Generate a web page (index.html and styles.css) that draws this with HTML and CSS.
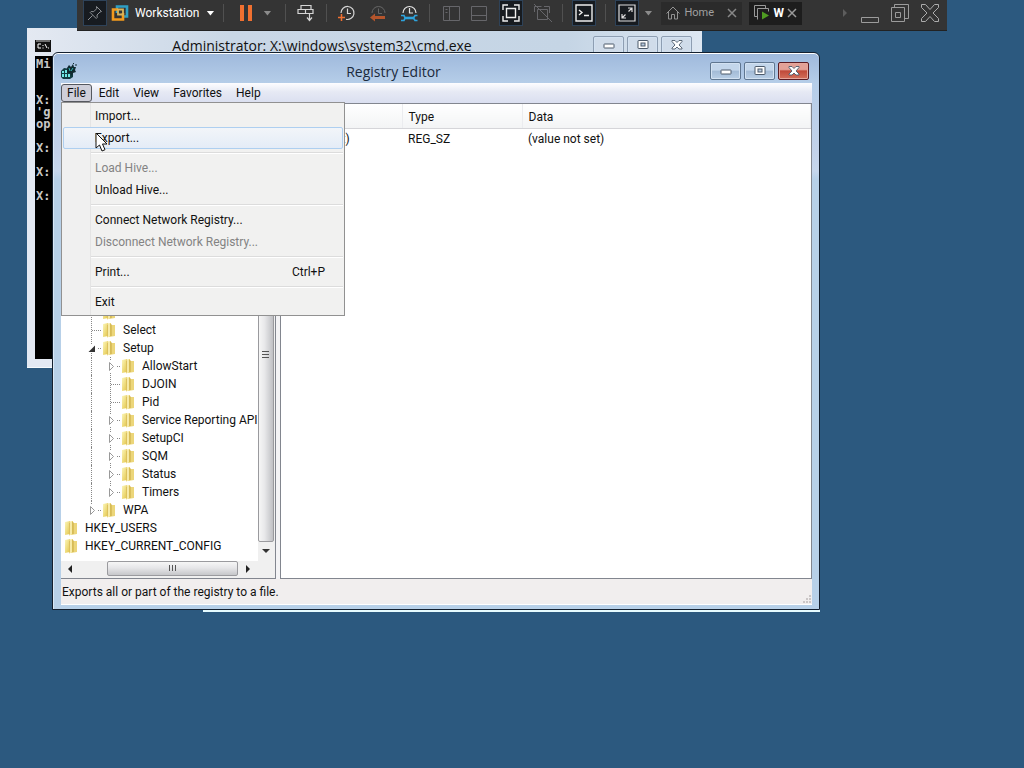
FILE: index.html
```html
<!DOCTYPE html>
<html lang="en">
<head>
<meta charset="utf-8">
<title>Registry Editor</title>
<link rel="stylesheet" href="styles.css">
</head>
<body>
<svg class="defs" width="0" height="0" aria-hidden="true">
  <defs>
    <linearGradient id="gold" x1="0" x2="1" y1="0" y2="1"><stop offset="0" stop-color="#fbf6bb"/><stop offset="1" stop-color="#e3c548"/></linearGradient>
    <linearGradient id="gold2" x1="0" x2="1"><stop offset="0" stop-color="#e3c862"/><stop offset=".5" stop-color="#fdf6c0"/><stop offset="1" stop-color="#e2c553"/></linearGradient>
    <symbol id="folder" viewBox="0 0 14 16"><path d="M1 2 6 1v13l-5 1z" fill="url(#gold)"/><path d="M7 3h6v11l-6 1z" fill="#ecd67a"/><path d="M5 1.500 9 1v13l-4 1.500z" fill="url(#gold2)"/><path d="M9 2v12" stroke="#b9952c" stroke-width=".7"/><path d="M5.500 3v11" stroke="#cfae45" stroke-width=".5"/></symbol>
    <symbol id="twig" viewBox="0 0 16 18"><path d="M5.500 0v18" stroke="#888" stroke-dasharray="1 1"/><path d="M3 4h7v11H3z" fill="#fff"/><path d="M4.500 5.500v8l4-4z" fill="#fff" stroke="#999"/><path d="M12 9.500h4" stroke="#888" stroke-dasharray="1 1"/></symbol>
    <symbol id="last" viewBox="0 0 16 18"><path d="M5.500 0v9" stroke="#888" stroke-dasharray="1 1"/><path d="M3 4h7v11H3z" fill="#fff"/><path d="M4.500 5.500v8l4-4z" fill="#fff" stroke="#999"/><path d="M12 9.500h4" stroke="#888" stroke-dasharray="1 1"/></symbol>
    <symbol id="open" viewBox="0 0 16 18"><path d="M5.500 0v18" stroke="#888" stroke-dasharray="1 1"/><path d="M2 5h9v9H2z" fill="#fff"/><path d="M9 6.500V13H2.500z" fill="#333"/><path d="M12 9.500h4" stroke="#888" stroke-dasharray="1 1"/></symbol>
    <symbol id="leaf" viewBox="0 0 16 18"><path d="M5.500 0v18M6 9.500h10" stroke="#888" stroke-dasharray="1 1"/></symbol>
    <symbol id="min" viewBox="0 0 14 12"><rect x="2" y="5" width="10" height="4" rx=".5" fill="#fff" stroke="#4c5a6b"/></symbol>
    <symbol id="max" viewBox="0 0 14 12"><rect x="2" y="1.500" width="10" height="8" rx=".5" fill="#fff" stroke="#4c5a6b"/><rect x="5" y="4" width="4" height="3" fill="#b9cbe0" stroke="#4c5a6b"/></symbol>
    <symbol id="cross" viewBox="0 0 14 12"><path d="M2 1.500h3l2 2 2-2h3v1L9 6l3 3v1H9L7 8l-2 2H2V9l3-3-3-3.500z" fill="#fff" stroke="#4c5a6b" stroke-width=".9"/></symbol>
  </defs>
</svg>
<main class="desktop">

  <section class="cmd">
    <header class="cmd-title">
      <svg class="cmd-icon" viewBox="0 0 16 12"><rect width="16" height="12" fill="#111"/><path d="M1 1h14" stroke="#ccc"/><path d="M6 4H3v4h3M8 5v1M8 7.500v1M10 4l2 4M13.500 7.500v1" stroke="#fff" fill="none"/></svg>
      <h2>Administrator: X:\windows\system32\cmd.exe</h2>
      <div class="caption">
        <button aria-label="Minimize console"><svg><use href="#min"/></svg></button>
        <button aria-label="Maximize console"><svg><use href="#max"/></svg></button>
        <button aria-label="Close console"><svg><use href="#cross"/></svg></button>
      </div>
    </header>
<pre class="console">Mi


X:
'g
op

X:

X:

X:</pre>
  </section>

  <div class="back-edge"></div>

  <section class="regedit">
    <header class="reg-title">
      <svg class="reg-icon" viewBox="0 0 16 16"><path d="M0 8 3 5l7 1 2 2v6l-3 2H2l-2-2z" fill="#123c42"/><path d="M1 8h2v2H1zM4 7h2v3H4zM1 11h2v3H1zM4 11h2v3H4zM7 11h2v3H7z" fill="#6fe8e4"/><path d="M6 5l2-3 2 2 2-3 1 3 2 0-1 3 1 2-3 1-1 3-2-3-3 0z" fill="#102a30"/><path d="M8 5l1 3M12 5l-2 3" stroke="#37b5b5"/><path d="M12 0l1 1M15 1v2" stroke="#102a30"/></svg>
      <h1>Registry Editor</h1>
      <div class="caption">
        <button aria-label="Minimize"><svg><use href="#min"/></svg></button>
        <button aria-label="Maximize"><svg><use href="#max"/></svg></button>
        <button class="close" aria-label="Close"><svg><use href="#cross"/></svg></button>
      </div>
    </header>

    <div class="client">
      <nav class="menubar">
        <button class="open">File</button><button>Edit</button><button>View</button><button>Favorites</button><button>Help</button>
      </nav>
      <div class="panes">
        <div class="tree-pane">
          <div class="tree-row">
            <ul class="tree">
              <li class="l1"><svg class="line"><use href="#leaf"/></svg><svg class="folder"><use href="#folder"/></svg></li>
              <li class="l1"><svg class="line"><use href="#leaf"/></svg><svg class="folder"><use href="#folder"/></svg>Select</li>
              <li class="l1"><svg class="line"><use href="#open"/></svg><svg class="folder"><use href="#folder"/></svg>Setup</li>
              <li class="l2"><svg class="line"><use href="#twig"/></svg><svg class="folder"><use href="#folder"/></svg>AllowStart</li>
              <li class="l2"><svg class="line"><use href="#leaf"/></svg><svg class="folder"><use href="#folder"/></svg>DJOIN</li>
              <li class="l2"><svg class="line"><use href="#leaf"/></svg><svg class="folder"><use href="#folder"/></svg>Pid</li>
              <li class="l2"><svg class="line"><use href="#twig"/></svg><svg class="folder"><use href="#folder"/></svg>Service Reporting API</li>
              <li class="l2"><svg class="line"><use href="#twig"/></svg><svg class="folder"><use href="#folder"/></svg>SetupCI</li>
              <li class="l2"><svg class="line"><use href="#twig"/></svg><svg class="folder"><use href="#folder"/></svg>SQM</li>
              <li class="l2"><svg class="line"><use href="#twig"/></svg><svg class="folder"><use href="#folder"/></svg>Status</li>
              <li class="l2"><svg class="line"><use href="#last"/></svg><svg class="folder"><use href="#folder"/></svg>Timers</li>
              <li class="l1"><svg class="line"><use href="#last"/></svg><svg class="folder"><use href="#folder"/></svg>WPA</li>
              <li class="l0"><svg class="folder"><use href="#folder"/></svg>HKEY_USERS</li>
              <li class="l0"><svg class="folder"><use href="#folder"/></svg>HKEY_CURRENT_CONFIG</li>
            </ul>
            <div class="vscroll">
              <div class="vthumb"><svg width="8" height="9"><path d="M0 1.500h7M0 4.500h7M0 7.500h7" stroke="#555"/></svg></div>
              <svg class="varrow" width="8" height="5"><path d="M0 0h8L4 4z" fill="#333"/></svg>
            </div>
          </div>
          <div class="hscroll">
            <svg width="5" height="8"><path d="M4 0v8L0 4z" fill="#222"/></svg>
            <div class="hthumb"><svg width="9" height="7"><path d="M1.500 0v6M4.500 0v6M7.500 0v6" stroke="#555"/></svg></div>
            <svg width="5" height="8"><path d="M0 0v8l4-4z" fill="#222"/></svg>
          </div>
        </div>
        <div class="list-pane">
          <table>
            <thead><tr><th class="c-name">Name</th><th class="c-type">Type</th><th>Data</th></tr></thead>
            <tbody><tr><td class="name">(Default)</td><td>REG_SZ</td><td>(value not set)</td></tr></tbody>
          </table>
        </div>
      </div>
      <footer class="status"><span>Exports all or part of the registry to a file.</span>
        <svg width="10" height="10"><path d="M8 1h2v2H8zM8 4h2v2H8zM5 4h2v2H5zM8 7h2v2H8zM5 7h2v2H5zM2 7h2v2H2z" fill="#cbc6c6"/></svg>
      </footer>
    </div>

    <div class="menu" role="menu">
      <button role="menuitem">Import...</button>
      <button role="menuitem" class="hot">Export...</button>
      <hr>
      <button role="menuitem" disabled>Load Hive...</button>
      <button role="menuitem">Unload Hive...</button>
      <hr>
      <button role="menuitem">Connect Network Registry...</button>
      <button role="menuitem" disabled>Disconnect Network Registry...</button>
      <hr>
      <button role="menuitem">Print...<span>Ctrl+P</span></button>
      <hr>
      <button role="menuitem">Exit</button>
    </div>
  </section>

  <div class="vmbar">
    <button class="boxed" aria-label="Pin"><svg width="16" height="16" viewBox="0 0 16 16" fill="none" stroke="#8d9094"><path d="M9.500 1.500l5 5-1.500.5-3 3 .2 2.500-1 1-6-6 1-1 2.500.2 3-3zM5.500 10.500 1 15"/></svg></button>
    <svg class="logo" width="18" height="18" viewBox="0 0 18 18" fill="none" stroke-width="2.600"><path d="M6 9V2.500h10v10h-4" stroke="#2f9fc4"/><path d="M7 5.500H2v10h10V9" stroke="#f39a1d"/><path d="M7 5.500h5v5H7z" stroke="#d9b45a" stroke-width="1.800"/></svg>
    <button class="product">Workstation<i class="drop"></i></button>
    <i class="sep"></i>
    <button class="pause" aria-label="Pause"><svg width="14" height="16"><path d="M1 0h4v16H1zM9 0h4v16H9z" fill="#f07030"/></svg><i class="drop dim"></i></button>
    <i class="sep"></i>
    <button class="g18" aria-label="Send keys"><svg width="18" height="18" viewBox="0 0 18 18" fill="none" stroke="#d5d5d5" stroke-width="1.200"><path d="M4 1.500h10v4H4zM1 5.500h7.500v4H1zM8.500 5.500H16v4H8.500zM12.500 9.500V16M10 13.500l2.500 3 2.500-3"/></svg></button>
    <i class="sep"></i>
    <div class="snap">
      <button aria-label="Take snapshot"><svg width="18" height="18" viewBox="0 0 18 18" fill="none" stroke="#d5d5d5" stroke-width="1.200"><path d="M3 9a6.500 6.500 0 1 1 5 6.300M9.500 4.500v5H13"/><path d="M0 13.500h7M3.500 10v7" stroke="#f07030" stroke-width="1.500"/></svg></button>
      <button aria-label="Revert snapshot"><svg width="18" height="18" viewBox="0 0 18 18" fill="none" stroke="#666"><path d="M3 9a6.500 6.500 0 0 1 13 0M9.500 4.500v5H13"/><path d="M1 13.500l5-4V12h10v3H6v2.500z" fill="#b4552c" stroke="none"/></svg></button>
      <button aria-label="Manage snapshots"><svg width="18" height="18" viewBox="0 0 18 18" fill="none" stroke="#e5e5e5" stroke-width="1.200"><path d="M3 9a6.500 6.500 0 0 1 13 0M9.500 4v5H13"/><path d="M5 14h9" stroke="#2ea3dc" stroke-width="2.600"/><path d="M1 11.500h3l1 2.500-1 2.500H1M17.500 11.500H15L13.500 14l1.500 2.500h2.500" stroke="#2ea3dc" stroke-width="1.600"/></svg></button>
    </div>
    <i class="sep"></i>
    <div class="views">
      <button aria-label="Library"><svg width="17" height="17" fill="none" stroke="#66666a"><path d="M.5 1.500h16v14H.5zM6.500 1.500v14M2.500 4.500h2M2.500 7.500h2"/></svg></button>
      <button aria-label="Thumbnails"><svg width="17" height="17" fill="none" stroke="#66666a"><path d="M.5 1.500h15v14H.5zM.5 10.500h15"/></svg></button>
      <button class="boxed" aria-label="Full screen"><svg width="18" height="18" fill="none" stroke="#eee" stroke-width="1.400"><path d="M1 6V1h5M12 1h5v5M17 12v5h-5M6 17H1v-5M4.500 4.500h9v9h-9z"/></svg></button>
      <button aria-label="Unity"><svg width="18" height="18" fill="none" stroke="#66666a"><path d="M.5 8V2.500h7M3.500 5.500h10v10h-10zM10 2.500h5.500V9M0 0l18 18"/></svg></button>
    </div>
    <i class="sep"></i>
    <button class="boxed" aria-label="Console"><svg width="18" height="18" fill="none" stroke="#eee" stroke-width="1.400"><path d="M1 1h16v16H1z"/><path d="M4 6l3 2.500L4 11M9 11.500h5"/></svg></button>
    <i class="sep"></i>
    <button class="boxed" aria-label="Stretch"><svg width="18" height="18" fill="none" stroke="#ddd" stroke-width="1.200"><path d="M1 1h16v16H1zM4 14 7.500 10.500M10.500 7.500 14 4M10 4h4v4M4 10v4h4"/></svg></button>
    <i class="drop dim stretch"></i>
    <div class="tabs">
      <button class="tab home"><svg width="14" height="14" fill="none" stroke="#929292"><path d="M.5 7.500 7 1l6.500 6.500M2.500 6v7h3V8.500h3V13h3V6"/></svg><span>Home</span><svg class="x" width="10" height="10" stroke="#888" stroke-width="1.500"><path d="M1 1l8 8M9 1 1 9"/></svg></button>
      <button class="tab active"><svg width="16" height="16" fill="none" stroke="#999"><path d="M3.500 11.500h-3V.5h11v3M3.500 14.500v-11h11v3"/><path d="M8 6.500v8l7-4z" fill="#4f9c22" stroke="none"/></svg><b>W</b><svg class="x" width="10" height="10" stroke="#999" stroke-width="1.500"><path d="M1 1l8 8M9 1 1 9"/></svg></button>
    </div>
    <div class="host">
      <svg class="more" width="5" height="8"><path d="M0 0v8l4-4z" fill="#5d5d5d"/></svg>
      <button aria-label="Minimize host"><svg width="20" height="20" fill="none" stroke="#9c9c9c"><path d="M1.500 14.500h17v5h-17z"/></svg></button>
      <button aria-label="Restore host"><svg width="20" height="20" fill="none" stroke="#9c9c9c"><path d="M1.500 4.500h13v14h-13zM4.500 4.500v-3h14v14h-4M5.500 9.500h5v5h-5z"/></svg></button>
      <button aria-label="Close host"><svg width="20" height="20" fill="none" stroke="#acacac"><path d="M1.500 1.500h4L10 6.500l4.500-5h4v3L13 10l5.500 5.500v3h-4L10 13.500l-4.500 5h-4v-3L7 10 1.500 4.500z"/></svg></button>
    </div>
  </div>

  <svg class="cursor" width="14" height="20" viewBox="0 0 14 20"><path d="M1 1v15l3.500-3 2.500 6 3-1.300L7.500 12H12z" fill="#fff" stroke="#111"/></svg>
</main>
</body>
</html>
```

FILE: styles.css
```css
* { box-sizing: border-box; }
body { margin: 0; }
button { font: inherit; color: inherit; background: none; border: 0; padding: 0; margin: 0; }
h1, h2 { margin: 0; font-family: "Open Sans", sans-serif; font-size: 14px; font-weight: 400; }
ul { margin: 0; padding: 0; list-style: none; }
svg { display: block; flex: none; }
.defs { position: absolute; }
.desktop {
  position: relative; min-height: 100vh; overflow: hidden;
  background: #2c597f; color: #111;
  font: 12px/18px Roboto, "Open Sans", sans-serif;
}

/* console window */
.cmd {
  position: absolute; left: 27px; top: 28px; width: 675px; height: 340px;
  display: flex; flex-direction: column; padding: 0 8px 8px;
  background: #e3e9f3; border-bottom: 1px solid #f6fafd;
}
.cmd-title {
  display: flex; align-items: flex-start; height: 27px; margin: 0 -8px; padding: 8px 10px 0 8px;
  background: linear-gradient(90deg, #e4e9f2, #c9d7e6 30%, #c5d5e5 80%, #dde7f2);
}
.cmd h2 { flex: 1; line-height: 20px; text-align: center; }
.cmd-icon { width: 16px; height: 12px; margin-top: 4px; }
.cmd .caption button { border-color: #8e9eb2; background: #d0dcea; height: 18px; }
.console {
  flex: 1; margin: 1px 0 0; padding: 2px 0 0 1px; background: #000; color: #c8c8c8;
  font: bold 12px/12px "DejaVu Sans Mono", monospace; overflow: hidden;
}
.back-edge { position: absolute; left: 203px; top: 600px; width: 617px; height: 12px; background: #e6fbff; }

.caption { display: flex; gap: 3px; }
.caption button {
  width: 31px; height: 18px; border: 1px solid #5f7690; border-radius: 2px;
  display: flex; justify-content: center; align-items: center;
  background: linear-gradient(#c3d6eb 45%, #a3bbd6 50%, #b9cfe6);
  box-shadow: inset 0 0 0 1px #d3e2f2;
}
.caption svg { width: 14px; height: 12px; }
.caption .close { border-color: #5b1c24; background: linear-gradient(#e3a197 40%, #c04a3a 50%, #d4705c); box-shadow: inset 0 0 0 1px #e5a79c; }

/* registry editor */
.regedit {
  position: absolute; left: 52px; top: 52px; width: 768px; height: 558px;
  display: flex; flex-direction: column; padding: 0 7px 4px 8px;
  border: 1px solid #14202f; border-radius: 6px 6px 0 0;
  background: linear-gradient(#9fb9dc, #b5cde8 30px, #c3d2ea 100px, #c6d6ec 118px, #b7d0e8 126px, #b7d0e8);
  box-shadow: inset 0 1px #fff, inset 1px 0 #d9e8f6;
}
.reg-title { display: flex; align-items: flex-start; height: 30px; padding: 9px 3px 0 0; }
.reg-title h1 { flex: 1; line-height: 20px; text-align: center; color: #1b2a3c; }
.reg-icon { width: 16px; height: 16px; margin-top: 1px; }
.client { flex: 1; display: flex; flex-direction: column; min-height: 0; background: #f1eeee; }
.menubar { display: flex; height: 20px; background: linear-gradient(#fdfdff, #e6e9f4 45%, #dadff0); }
.menubar button { padding: 0 7px; line-height: 20px; height: 19px; }
.menubar .open { padding: 0 5px; border: 1px solid #55585f; border-radius: 3px; background: #cfcfd9; line-height: 16px; margin-top: 1px; height: 18px; }
.panes { flex: 1; display: flex; gap: 4px; min-height: 0; background: #f3f3f5; }
.tree-pane { width: 215px; display: flex; flex-direction: column; border: 1px solid #82868f; border-left: 0; background: #fff; }
.tree-row { flex: 1; display: flex; min-height: 0; }
.tree { flex: 1; min-width: 0; display: flex; flex-direction: column; justify-content: flex-end; padding-bottom: 6px; overflow: hidden; }
.tree li { position: relative; display: flex; align-items: center; height: 18px; line-height: 18px; flex: none; white-space: nowrap; }
.tree .l0 { padding-left: 3px; }
.tree .l1 { padding-left: 25px; }
.tree .l2 { padding-left: 44px; }
.folder { width: 14px; height: 16px; margin-right: 7px; }
.line { width: 16px; height: 18px; }
.l2::before { content: ""; position: absolute; left: 30px; top: 0; bottom: 0; border-left: 1px dotted #888; }
.vscroll { width: 17px; display: flex; flex-direction: column; padding-right: 1px; align-items: center; background: #f0f0f0; }
.vthumb { flex: 1; width: 16px; margin-top: 60px; padding-top: 185px; border: 1px solid #9a9a9e; border-radius: 2px; background: linear-gradient(90deg, #f6f6f6, #e8e8ea 40%, #bfc0c4); display: flex; justify-content: center; align-items: flex-start; }
.varrow { margin: 7px 0; }
.hscroll { display: flex; align-items: center; height: 17px; padding: 0 24px 2px 7px; background: #f0f0f0; }
.hthumb { flex: 1; height: 15px; margin: 0 8px 0 34px; border: 1px solid #9a9a9e; border-radius: 2px; display: flex; align-items: center; justify-content: center; background: linear-gradient(#f6f6f6, #e6e6e8 45%, #c6c7ca); }
.list-pane { flex: 1; border: 1px solid #82868f; background: #fff; }
table { width: 100%; border-collapse: collapse; table-layout: fixed; }
th, td { padding: 0 6px; text-align: left; font-weight: 400; }
th { height: 24px; padding-top: 2px; background: linear-gradient(#fff, #f3f4f5); border-right: 1px solid #ebecef; border-bottom: 1px solid #d5d5d9; }
td { height: 22px; }
td.name { padding-left: 22px; }
.c-name { width: 121px; }
.c-type { width: 120px; }
.status { display: flex; height: 26px; padding: 3px 1px 0 1px; justify-content: space-between; line-height: 20px; border-bottom: 1px solid #fff; }
.status svg { align-self: flex-end; }

.menu {
  position: absolute; left: 8px; top: 49px; width: 284px; padding: 2px 1px;
  display: flex; flex-direction: column;
  border: 1px solid #919191; background: linear-gradient(90deg, #f0f0f0 28px, #e4e4e4 28px, #e4e4e4 29px, #f1f1f0 29px);
}
.menu button { display: flex; justify-content: space-between; height: 22px; padding: 0 18px 0 32px; line-height: 22px; text-align: left; }
.menu .hot { border: 1px solid #aecff0; border-radius: 2px; padding-left: 31px; line-height: 20px; background: linear-gradient(#f2f5f9, #e4ecf7); }
.menu button:disabled { color: #838383; }
.menu hr { height: 8px; margin: 0 0 0 28px; border: 0; background: linear-gradient(#dcdcdc, #dcdcdc) 0 3px / 100% 1px no-repeat, linear-gradient(#fff, #fff) 0 4px / 100% 1px no-repeat; }

/* virtual machine toolbar */
.vmbar {
  position: absolute; left: 77px; top: 0; width: 870px; height: 31px;
  display: flex; align-items: center; padding: 0 7px 4px 6px;
  background: #343434; border-bottom: 1px solid #222; color: #fff;
}
.vmbar button { display: flex; align-items: center; justify-content: center; flex: none; }
.boxed { width: 24px; height: 26px; background: #171b20; border: 1px solid #2e4258; }
.logo { margin: 0 6px 0 4px; }
.product { gap: 7px; }
.drop { width: 8px; height: 5px; background: #fff; clip-path: polygon(0 0, 100% 0, 50% 100%); }
.dim { background: #8b8b8b; }
.sep { width: 1px; height: 18px; margin: 0 9px; background: #505050; flex: none; }
.pause { gap: 10px; margin: 0 5px 0 6px; }
.g18 { margin: 0 2px; }
.snap { display: flex; gap: 13px; margin: 0 2px; }
.views { display: flex; gap: 11px; margin: 0 1px 0 4px; }
.stretch { margin: 0 9px 0 5px; }
.tabs { display: flex; gap: 7px; }
.tab { height: 23px; color: #a0a0a0; background: #2b2b2b; font-size: 11px; }
.vmbar .tab { justify-content: flex-start; }
.home { width: 81px; padding: 0 5px; gap: 4px; }
.home .x { margin-left: auto; }
.active { width: 53px; padding: 0 5px; gap: 3px; background: #1d1d1d; color: #fff; font-size: 12px; }
.host { display: flex; align-items: center; gap: 10px; margin-left: auto; }
.host .more { margin-right: 2px; }
.cursor { position: absolute; left: 95px; top: 132px; }
```
